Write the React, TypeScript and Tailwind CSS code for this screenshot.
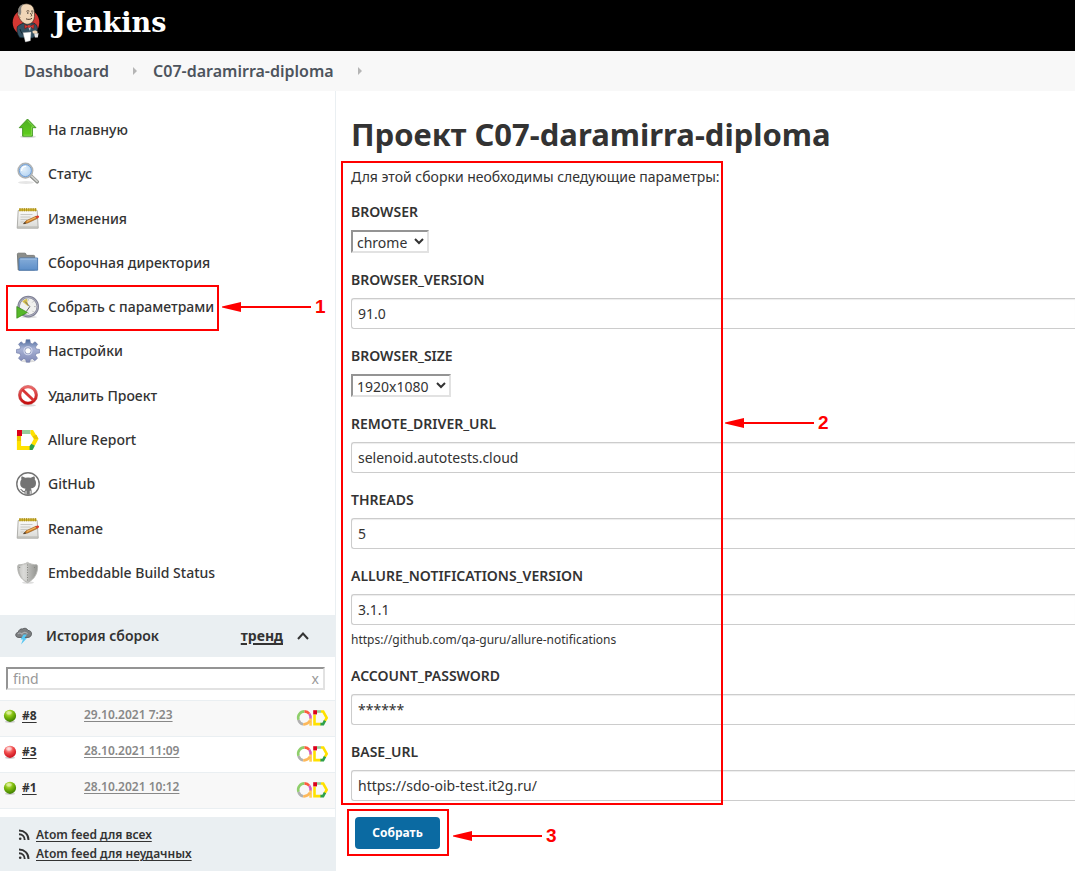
import type { ReactNode } from 'react';

type IconProps = { children: ReactNode };

function Icon24({ children }: IconProps) {
  return (
    <svg viewBox="0 0 24 24" className="size-6 shrink-0" aria-hidden="true">
      {children}
    </svg>
  );
}

function Gradients() {
  return (
    <svg className="absolute size-0" aria-hidden="true">
      <defs>
        <linearGradient id="gGreen" x1="0" y1="0" x2="0" y2="1">
          <stop offset="0" stopColor="#4fae25" />
          <stop offset="1" stopColor="#5fcf1c" />
        </linearGradient>
        <linearGradient id="gPaper" x1="0" y1="0" x2="0" y2="1">
          <stop offset="0" stopColor="#fbfbfa" />
          <stop offset="1" stopColor="#d9d9d5" />
        </linearGradient>
        <linearGradient id="gFolder" x1="0" y1="0" x2="0" y2="1">
          <stop offset="0" stopColor="#85acd8" />
          <stop offset="1" stopColor="#5d8fc9" />
        </linearGradient>
        <linearGradient id="gGear" x1="0" y1="0" x2="0" y2="1">
          <stop offset="0" stopColor="#4d6b9c" />
          <stop offset="0.4" stopColor="#a9b3d6" />
          <stop offset="1" stopColor="#8089b5" />
        </linearGradient>
        <linearGradient id="gRed" x1="0" y1="0" x2="0" y2="1">
          <stop offset="0" stopColor="#ea6a6a" />
          <stop offset="1" stopColor="#c50d0d" />
        </linearGradient>
        <linearGradient id="gShield" x1="0" y1="0" x2="1" y2="0">
          <stop offset="0" stopColor="#a9aaa7" />
          <stop offset="0.3" stopColor="#d6d6d3" />
          <stop offset="0.5" stopColor="#bdbdba" />
          <stop offset="1" stopColor="#92938f" />
        </linearGradient>
        <radialGradient id="gBallGreen" cx="0.4" cy="0.25" r="0.75">
          <stop offset="0" stopColor="#d3ee58" />
          <stop offset="0.5" stopColor="#7cba0c" />
          <stop offset="1" stopColor="#3d7d00" />
        </radialGradient>
        <radialGradient id="gBallRed" cx="0.4" cy="0.25" r="0.75">
          <stop offset="0" stopColor="#ffd0d0" />
          <stop offset="0.5" stopColor="#f04a4a" />
          <stop offset="1" stopColor="#c80f1c" />
        </radialGradient>
        <radialGradient id="gLens" cx="0.4" cy="0.4" r="0.7">
          <stop offset="0" stopColor="#e3f0fb" />
          <stop offset="1" stopColor="#a9cdf0" />
        </radialGradient>
      </defs>
    </svg>
  );
}

const UpIcon = () => (
  <Icon24>
    <ellipse cx="12" cy="18.8" rx="8" ry="1.4" fill="#dcdcdc" />
    <path d="M11.5 1 20 9.700h-3.600v8.500H6.600V9.700H3.200z" fill="url(#gGreen)" stroke="#3f9420" strokeWidth="0.9" strokeLinejoin="round" />
    <path d="M11.500 2.600 17.600 8.900h-2.100v8.300H7.600" fill="none" stroke="#93e05f" strokeWidth="0.7" />
  </Icon24>
);

const SearchIcon = () => (
  <Icon24>
    <ellipse cx="10" cy="20.5" rx="8" ry="1.5" fill="#e6e6e6" />
    <path d="m14.5 13.5 6.7 6.300" stroke="#8a8c88" strokeWidth="3.600" strokeLinecap="round" />
    <path d="m15.500 14 5.600 5.300" stroke="#cfd0cd" strokeWidth="1.800" strokeLinecap="round" />
    <circle cx="9.400" cy="8.600" r="7.200" fill="url(#gLens)" stroke="#b0b3b4" strokeWidth="1.700" />
    <circle cx="9.400" cy="8.600" r="6" fill="none" stroke="#6f9fd8" strokeWidth="1" />
    <path d="M5.600 9c0-3 2-4.600 4.600-4.600" fill="none" stroke="#fff" strokeWidth="1.300" />
  </Icon24>
);

const NotepadIcon = () => (
  <Icon24>
    <path d="M2.200 3.500h19l1 17.700H1.200z" fill="url(#gPaper)" stroke="#a8a8a4" strokeWidth="0.900" />
    <path d="M1.200 20h21" stroke="#b4b4af" strokeWidth="1" />
    <path d="M3 1.500h17.600v2.600H3z" fill="#d8bd3c" />
    <path d="M4 1v3.400M6.200 1v3.400M8.400 1v3.400M10.600 1v3.400M12.800 1v3.400M15 1v3.400M17.200 1v3.400M19.400 1v3.400" stroke="#9a7f10" strokeWidth="0.800" />
    <path d="M4.500 7.500h12M4.500 10h10M4.500 12.500h7M4.500 15h4" stroke="#c4c4c0" strokeWidth="0.900" />
    <path d="m7.500 16.800 2.600-3 10-4.600 1.200 2.200-9.700 4.600z" fill="#d88a2c" stroke="#8a5014" strokeWidth="0.600" />
    <path d="m19.700 9.300 1.700-.8c1.400-.3 2.300 1.300 1.200 2.200l-1.800.9z" fill="#dc3d2c" />
    <path d="m7.200 16.900 1.800-2 1.100 1.500z" fill="#3a3a3a" />
    <path d="m11 14.400 8.500-3.900" stroke="#f6c274" strokeWidth="0.900" />
  </Icon24>
);

const FolderIcon = () => (
  <Icon24>
    <path d="M1.400 3.200c0-.6.400-1 1-1h6.400c.7 0 1 .4 1.200 1l.3 1.200h7.400c.6 0 1 .4 1 1V19H2.200z" fill="#8c8e8b" stroke="#737572" strokeWidth="0.900" />
    <path d="M4.400 7h17.200v12.200H3V8.200C3 7.500 3.600 7 4.400 7z" fill="url(#gFolder)" stroke="#4a76ad" strokeWidth="0.900" />
    <path d="M4.300 8h16.500" stroke="#b3cdeb" strokeWidth="0.800" />
  </Icon24>
);

const ClockIcon = () => (
  <Icon24>
    <ellipse cx="13" cy="22" rx="8" ry="1.200" fill="#dedede" />
    <circle cx="12.200" cy="11.600" r="9.600" fill="#f1f1ee" stroke="#7e7f93" strokeWidth="2.400" />
    <circle cx="12.200" cy="11.600" r="9.400" fill="none" stroke="#b6b7c6" strokeWidth="0.800" />
    <path d="M12.200 11.600 6.200 6.600A8 8 0 0 1 11 3.800z" fill="#d9c14c" />
    <path d="M12.200 4.200v1.400M19.600 11.600h-1.400M12.200 19v-1.400M17.400 6.400l-1 1M17.400 16.800l-1-1" stroke="#9a9a9a" strokeWidth="0.800" />
    <path d="m9.200 6.600 4.600 5-3.400 4.800" fill="none" stroke="#666" strokeWidth="1" />
    <path d="M.8 11.500 11.400 17.400.8 23.200z" fill="#56b82a" stroke="#348514" strokeWidth="0.700" />
  </Icon24>
);

const GearIcon = () => (
  <Icon24>
    <ellipse cx="12" cy="22.200" rx="7" ry="1.200" fill="#dcdcdc" />
    <path
      fill="url(#gGear)"
      stroke="#6a75a3"
      strokeWidth="0.600"
      fillRule="evenodd"
      d="M10.100.7h3.800l.5 3.400 1.900.8 2.800-2.100 2.500 2.500-2.100 2.800.8 1.900 3.300.5v3.400l-3.300.6-.8 1.900 2 2.800-2.500 2.500-2.700-2-2 .8-.6 2.700h-3.400l-.6-2.700-1.900-.8-2.800 2-2.500-2.500 2.100-2.800-.8-1.900-3.300-.6v-3.400l3.300-.5.800-1.900L2.500 5.300 5 2.800l2.800 2.100 1.900-.8zM12 8.700a3.100 3.100 0 1 0 0 6.200 3.100 3.100 0 0 0 0-6.200z"
    />
    <circle cx="12" cy="11.800" r="4" fill="none" stroke="#d5daee" strokeWidth="1.100" />
  </Icon24>
);

const NoIcon = () => (
  <Icon24>
    <ellipse cx="12" cy="21.300" rx="8" ry="1.200" fill="#dadada" />
    <circle cx="12" cy="11" r="8.200" fill="#fff" stroke="url(#gRed)" strokeWidth="2.800" />
    <circle cx="12" cy="11" r="9.600" fill="none" stroke="#c03a3a" strokeWidth="0.500" />
    <path d="m6.200 5.400 11.600 11.200" stroke="#d83434" strokeWidth="2.800" />
  </Icon24>
);

const AllureIcon = () => (
  <Icon24>
    <path d="M3 7v13h11" fill="none" stroke="#ffe100" strokeWidth="4.200" />
    <path d="M1 8h4v5H1z" fill="#ebc400" />
    <path d="M1 2h5v6H1z" fill="#dc001b" />
    <path d="M6 2h8.500v4H6z" fill="#97cc9b" />
    <path d="M14.500 2h2.500l5.500 9-3.800 7-3.500-2 2.600-5-3.300-5z" fill="#ffe100" />
    <path d="m18.300 11-1.500-2.700 3.700-1.600 2 4.300z" fill="#e9c700" />
    <path d="m15.300 15.800 3.600 2-2.300 4.200h-3v-4z" fill="#2da04a" />
  </Icon24>
);

const GitHubIcon = () => (
  <Icon24>
    <circle cx="12" cy="12" r="11.200" fill="#fff" stroke="#737373" strokeWidth="1.400" />
    <path
      fill="#737373"
      d="M5.500 4.500c1.500 0 2.700.7 3.500 1.300a13 13 0 0 1 6 0c.8-.6 2-1.300 3.500-1.300.5 1.200.5 2.200.2 3 .9 1 1.300 2.100 1.300 3.600 0 3.800-2.200 5-5.300 5.400.6.500.9 1.300.9 2.300v3.400h-1v-3.500h-.8v4h-3.400v-4h-.8v3.500H8.500v-2c-2.600.3-2.800-2.400-4.500-3 1.600-.7 2.500 1.500 3.500 1.700.6.100 1 0 1.300-.2.100-.9.400-1.600.8-2-3.100-.4-5.400-1.700-5.400-5.500 0-1.500.4-2.700 1.200-3.600-.3-.9-.3-2 .1-3.100z"
    />
  </Icon24>
);

const ShieldIcon = () => (
  <Icon24>
    <ellipse cx="12" cy="21.600" rx="6" ry="1.200" fill="#dedede" />
    <path d="M11.500 1.400c2.500 1.600 6 2.400 9.300 2.300l.8 1.200c.2 7-2.500 13-10.100 16.800C4.100 17.900 1.400 12 1.700 4.900l.8-1.200c3.300.1 6.500-.7 9-2.300z" fill="url(#gShield)" stroke="#b5b6b2" strokeWidth="0.900" />
    <path d="M11.500 2.800v17.700C5.400 17.200 3.100 12 3.200 5.200c3-.1 5.800-.7 8.300-2.400z" fill="#e0e0dd" opacity="0.500" />
    <path d="M11.500 3.500v16M3.200 6.500h2M18 6.500h2" stroke="#858681" strokeWidth="1" strokeDasharray="1 1.500" />
  </Icon24>
);

const StormIcon = () => (
  <svg viewBox="0 0 18 18" className="size-[18px] shrink-0" aria-hidden="true">
    <path d="M4 10.500C1.200 10.500.4 8.800.8 7.200 1.200 5.800 2.500 5.300 3.300 5.300 3.600 2.800 5.600 1.600 7.600 1.900 9 .8 12 1 13 3.400c2.300.1 3.800 1.600 3.500 3.800-.2 1.600-1.200 3-3.500 3.300z" fill="#7b7e80" stroke="#505356" strokeWidth="0.800" />
    <path d="M3 7c1-1.500 3.500-1 4 .2C7.600 5 11 4.500 12.500 7" fill="none" stroke="#a9acae" strokeWidth="1.100" />
    <path d="M8.500 7.500 5.500 12.600h2.400L6 17.600l6-6.500H9.500L12 7.500z" fill="#57c7f2" />
  </svg>
);

const FeedIcon = () => (
  <svg viewBox="0 0 12 12" className="size-3 shrink-0" fill="none" stroke="#333" strokeWidth="1.900" aria-hidden="true">
    <path d="M1 1.500c5.500 0 9.500 4 9.500 9.500M1 5.300c3.400 0 5.700 2.300 5.700 5.700" />
    <circle cx="2.200" cy="9.800" r="1.300" fill="#333" stroke="none" />
  </svg>
);

const AllureBuildIcon = () => (
  <svg viewBox="0 0 32 18" className="h-[18px] w-8 shrink-0" fill="none" strokeWidth="2.600" aria-hidden="true">
    <path d="M8.500 2.400a6.400 6.400 0 0 0-6 8.400" stroke="#8fcf6b" />
    <path d="M2.500 10.800a6.400 6.400 0 0 0 4.700 4.500" stroke="#b1b1b1" />
    <path d="M8.500 2.400a6.400 6.400 0 0 1 4.800 2.400" stroke="#fd5a3e" />
    <path d="M13.300 4.800a6.400 6.400 0 0 1 1.200 5.200" stroke="#d35ebe" />
    <path d="M14.600 9.500v7.200" stroke="#ffce57" />
    <path d="M7.200 15.300c3 .3 5-.7 6.800-3.700" stroke="#fdb85a" />
    <path d="M18.500 5.500v9.600h6.400" stroke="#ffe100" />
    <path d="M17.200 1.200h3.800v4.200h-3.800z" fill="#dc001b" stroke="none" />
    <path d="M21 2.500h4" stroke="#97cc9b" />
    <path d="M25 2.500h2.200l3.500 6.300-2 3.400" stroke="#ffe100" />
    <path d="m29 11.600-1.900 3.500h-2.700" stroke="#2da04a" />
  </svg>
);

function Ball({ ok }: { ok: boolean }) {
  return (
    <svg viewBox="0 0 14 14" className="size-3.5 shrink-0" role="img" aria-label={ok ? 'Успешно' : 'Ошибка'}>
      <ellipse cx="7" cy="12.800" rx="5" ry="1.100" fill="#cfcfcf" />
      <circle cx="7" cy="6.800" r="6.100" fill={ok ? 'url(#gBallGreen)' : 'url(#gBallRed)'} />
      <ellipse cx="6" cy="3.800" rx="2.800" ry="1.900" fill="#fff" opacity="0.400" />
    </svg>
  );
}

const JenkinsLogo = () => (
  <svg viewBox="12 3 28 40" className="h-10 w-7" aria-hidden="true">
    <ellipse cx="26" cy="22.500" rx="13.300" ry="13.300" fill="#d33833" />
    <path d="M17.500 26.500c3-2.500 5.500-3.500 8-3.700l8 .2c2.500.7 3.700 2.500 4 6l-.5 4.500-4 4.500-13-.3c-2.300-2.200-3.800-7-2.500-11.200z" fill="#335061" stroke="#0c1a22" strokeWidth="0.600" />
    <path d="m27.500 25 1.500 4 2-4-1 6z" fill="#dfe6ea" />
    <path d="M18.500 11c-.6-4 3.500-7.300 8-7.200 5 .1 7.600 3.300 7.800 7.700.4 3.300.6 7-1.300 9.800-1.700 2.400-5.400 3.700-8 2.500-3.500-1.700-5.500-4.500-6.400-7.500-.8-.8-1.200-3.500-.1-5.300z" fill="#f0d6b7" stroke="#2a211a" strokeWidth="0.600" />
    <path d="M18.300 14c-1-5.500 1.200-9 6-10.100-2 1.300-3.400 3-3.200 5.700.2 2 .4 4.300-.8 5.600z" fill="#81807c" />
    <path d="M19 15c-.2 1.500.5 2.600 1.500 2.700" fill="none" stroke="#8f6b4b" strokeWidth="0.800" />
    <path d="M26.500 11.300c1-.7 2-.6 2.800-.1M31 11.400c.7-.5 1.500-.5 2.200 0M30.200 13.200c1.200 1.200 2 2.400.8 3.200M26 18.800c2 .9 4.400.8 6-.5" fill="none" stroke="#3b2a1e" strokeWidth="0.900" />
    <path d="M27 13h1.500M31.700 13h1" stroke="#111" strokeWidth="1.200" />
    <path d="m24.500 24.500 4 1.900-3.700 2.400zM34.200 24.300l-4.500 2 4 2.700z" fill="#d33833" stroke="#6d100d" strokeWidth="0.500" />
    <circle cx="29" cy="26.400" r="1.300" fill="#d33833" />
    <path d="M20 29c1 3 2 5.300 4.500 6.500" fill="none" stroke="#13242e" strokeWidth="0.900" />
    <path d="m23 32.700 8-.7-.6 8.700-5 1.300z" fill="#fff" stroke="#aaa" strokeWidth="0.400" />
    <path d="M34.200 33.200h4.400l-.8 4.200h-3z" fill="#e5e5e5" />
    <path d="M32.500 31c1.800-1 4.300-.6 5.400 1l-1.500 1.800-3.600-.6z" fill="#f0d6b7" />
  </svg>
);

function Callout({ label, className }: { label: string; className: string }) {
  return (
    <span className={`pointer-events-none absolute flex items-center gap-1 text-[#ff0000] ${className}`}>
      <svg viewBox="0 0 89 12" className="h-3 w-[89px]" fill="currentColor" aria-hidden="true">
        <path d="M0 5.500 19 1v10L0 6.500z" />
        <path d="M18 5h71v2H18z" />
      </svg>
      <span className="font-['Liberation_Sans',sans-serif] text-[19px] leading-5 font-bold">{label}</span>
    </span>
  );
}

const tasks = [
  { label: 'На главную', icon: <UpIcon /> },
  { label: 'Статус', icon: <SearchIcon /> },
  { label: 'Изменения', icon: <NotepadIcon /> },
  { label: 'Сборочная директория', icon: <FolderIcon /> },
  { label: 'Собрать с параметрами', icon: <ClockIcon />, marked: true },
  { label: 'Настройки', icon: <GearIcon /> },
  { label: 'Удалить Проект', icon: <NoIcon /> },
  { label: 'Allure Report', icon: <AllureIcon /> },
  { label: 'GitHub', icon: <GitHubIcon /> },
  { label: 'Rename', icon: <NotepadIcon /> },
  { label: 'Embeddable Build Status', icon: <ShieldIcon /> },
];

const builds = [
  { id: '#8', date: '29.10.2021 7:23', ok: true },
  { id: '#3', date: '28.10.2021 11:09', ok: false },
  { id: '#1', date: '28.10.2021 10:12', ok: true },
];

type Param = { name: string; value: string; select?: boolean; width?: string; note?: string };

const params: Param[] = [
  { name: 'BROWSER', value: 'chrome', select: true, width: 'w-[78px]' },
  { name: 'BROWSER_VERSION', value: '91.0' },
  { name: 'BROWSER_SIZE', value: '1920x1080', select: true, width: 'w-[100px]' },
  { name: 'REMOTE_DRIVER_URL', value: 'selenoid.autotests.cloud' },
  { name: 'THREADS', value: '5' },
  { name: 'ALLURE_NOTIFICATIONS_VERSION', value: '3.1.1', note: 'https://github.com/qa-guru/allure-notifications' },
  { name: 'ACCOUNT_PASSWORD', value: '******' },
  { name: 'BASE_URL', value: 'https://sdo-oib-test.it2g.ru/' },
];

const inset = 'border-2 border-t-[#949494] border-l-[#949494] border-r-[#e2e2e2] border-b-[#e2e2e2]';

function Crumb({ children }: IconProps) {
  return (
    <li className="flex items-center">
      <a href="#" className="pr-6">{children}</a>
      <svg viewBox="0 0 4 8" className="mr-4 h-2 w-1" fill="#b5b5b5" aria-hidden="true">
        <path d="M0 0v8l4-4z" />
      </svg>
    </li>
  );
}

function Sidebar() {
  return (
    <aside className="w-[336px] shrink-0 border-r border-[#eaeff2] pt-[17px]">
      <nav aria-label="Проект" className="font-medium">
        <ul className="grid h-[487px] auto-rows-fr">
          {tasks.map((t) => (
            <li key={t.label} className="relative flex items-center">
              <a href="#" className="flex items-center gap-2 pl-4">
                {t.icon}
                {t.label}
              </a>
              {t.marked && (
                <>
                  <span className="pointer-events-none absolute top-0 -bottom-0.5 left-1.5 w-[213px] border-2 border-[#ff0000]" />
                  <Callout label="1" className="left-[222px]" />
                </>
              )}
            </li>
          ))}
        </ul>
      </nav>

      <section className="mt-5">
        <div className="flex h-[42px] items-center bg-[#eaeff2] pr-6 pl-[15px]">
          <StormIcon />
          <h2 className="ml-[13px] flex-1 font-semibold">История сборок</h2>
          <a href="#" className="font-bold underline decoration-2 underline-offset-2">тренд</a>
          <button type="button" aria-label="Свернуть" className="ml-3 flex size-4 items-center justify-center">
            <svg viewBox="0 0 12 8" className="h-2 w-3" fill="none" stroke="#333" strokeWidth="2" aria-hidden="true">
              <path d="m1 7 5-5.500L11 7" />
            </svg>
          </button>
        </div>
        <div className="px-1.5 py-2.5 pr-2.5">
          <div className={`flex h-[23px] items-center pr-1 pl-[5px] text-[#999] ${inset}`}>
            <input aria-label="find" placeholder="find" className="min-w-0 flex-1 outline-none placeholder:text-[#999]" />
            <button type="button" aria-label="Очистить" className="leading-4">x</button>
          </div>
        </div>
        <table className="w-full border-b border-[#eaeff2] text-xs leading-4">
          <tbody>
            {builds.map((b, i) => (
              <tr key={b.id} className={`h-9 border-t border-[#eaeff2] ${i % 2 ? '' : 'bg-[#f8f8f8]'}`}>
                <td className="w-[84px] pl-[3px] align-top">
                  <div className="flex items-center gap-[5px] pt-[7px]">
                    <Ball ok={b.ok} />
                    <a href="#" className="font-bold underline underline-offset-2">{b.id}</a>
                  </div>
                </td>
                <td className="pt-[6px] align-top">
                  <a href="#" className="font-semibold text-[#888] underline underline-offset-2">{b.date}</a>
                </td>
                <td className="w-[39px] pt-2 pr-[7px] align-top">
                  <a href="#" aria-label="Allure Report" className="block">
                    <AllureBuildIcon />
                  </a>
                </td>
              </tr>
            ))}
          </tbody>
        </table>
        <ul className="mt-2 bg-[#eaeff2] py-2 pl-[18px] text-xs leading-[19px] font-semibold">
          {['Atom feed для всех', 'Atom feed для неудачных'].map((f) => (
            <li key={f} className="flex items-center gap-1.5">
              <FeedIcon />
              <a href="#" className="underline underline-offset-2">{f}</a>
            </li>
          ))}
        </ul>
      </section>
    </aside>
  );
}

function Field({ p }: { p: Param }) {
  return (
    <div className="flex flex-col items-start">
      <label htmlFor={p.name} className="mb-2 font-semibold">{p.name}</label>
      {p.select ? (
        <select id={p.name} className={`h-[23px] bg-white pb-0.5 text-[#333] ${p.width} ${inset}`}>
          <option>{p.value}</option>
        </select>
      ) : (
        <input
          id={p.name}
          defaultValue={p.value}
          className="h-[31px] w-full rounded-l-[3px] border border-r-0 border-[#ccc] px-1.5 shadow-[inset_0_1px_1px_rgba(0,0,0,0.075)]"
        />
      )}
      {p.note && <p className="pt-1.5 text-xs leading-[18px]">{p.note}</p>}
    </div>
  );
}

export default function App() {
  return (
    <div className="min-h-screen overflow-x-hidden bg-white font-['Noto_Sans',sans-serif] text-sm leading-5 text-[#333]">
      <Gradients />
      <header className="flex h-[51px] items-start bg-black pl-3">
        <a href="#" className="flex items-start gap-[13px] pt-[3px] text-white">
          <JenkinsLogo />
          <span className="font-['DejaVu_Serif',serif] text-[27px] leading-10 font-bold">Jenkins</span>
        </a>
      </header>
      <nav aria-label="Навигация" className="h-10 bg-[#f8f8f8]">
        <ol className="flex h-full items-center pl-6 text-base font-semibold text-[#4d545d]">
          <Crumb>Dashboard</Crumb>
          <Crumb>C07-daramirra-diploma</Crumb>
        </ol>
      </nav>
      <div className="flex">
        <Sidebar />
        <main className="min-w-0 flex-1 pl-[15px]">
          <h1 className="pt-[23px] pb-[13px] text-[31px] leading-10 font-bold">Проект C07-daramirra-diploma</h1>
          <form onSubmit={(e) => e.preventDefault()}>
            <div className="relative">
              <p className="mb-[15px]">Для этой сборки необходимы следующие параметры:</p>
              <div className="flex flex-col gap-[17px]">
                {params.map((p) => (
                  <Field key={p.name} p={p} />
                ))}
              </div>
              <span className="pointer-events-none absolute -top-1.5 -bottom-1 -left-2.5 w-[382px] border-2 border-[#ff0000]" />
              <Callout label="2" className="top-[246px] left-[374px]" />
            </div>
            <div className="relative mt-4 ml-1 flex w-fit">
              <button type="submit" className="h-8 w-[85px] rounded-[4px] bg-[#0b6aa2] text-xs font-bold text-white">
                Собрать
              </button>
              <span className="pointer-events-none absolute -top-2 -right-[9px] -bottom-[7px] -left-2 border-2 border-[#ff0000]" />
              <Callout label="3" className="top-[9px] left-[98px]" />
            </div>
          </form>
        </main>
      </div>
    </div>
  );
}
